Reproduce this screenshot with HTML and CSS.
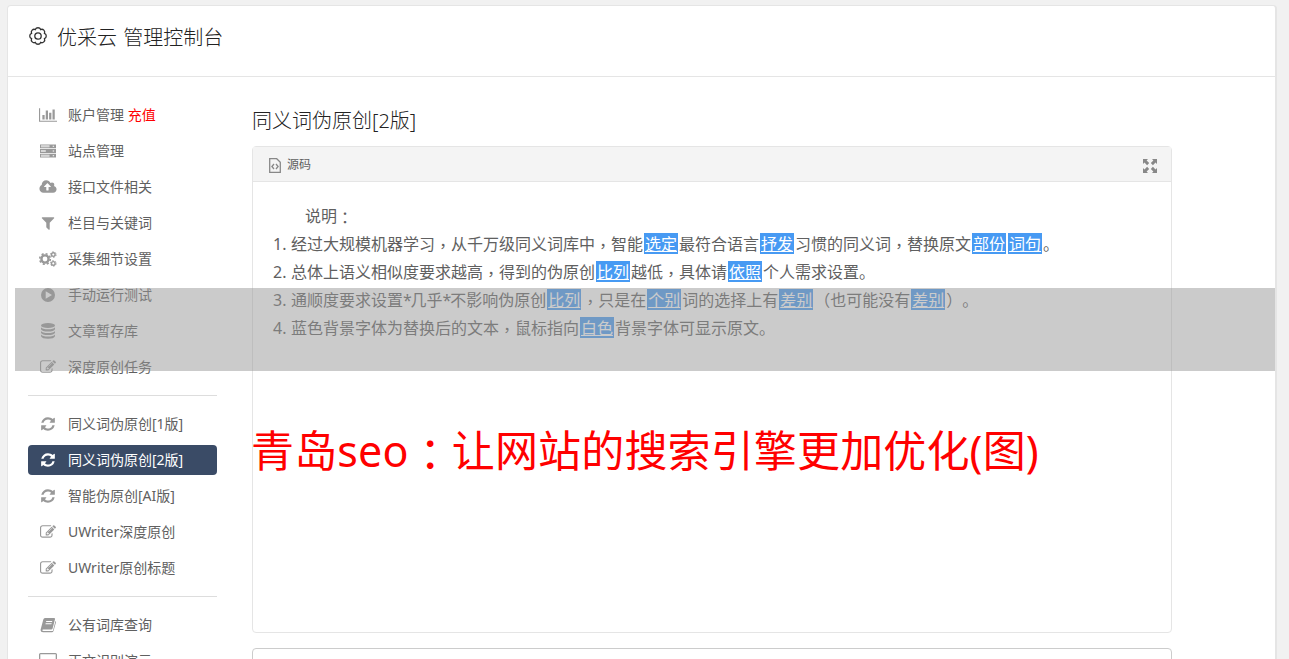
FILE: index.html
```html
<!DOCTYPE html>
<html>
<head>
    <meta charset="UTF-8">
    <meta name="viewport" content="width=device-width, initial-scale=1.0">
    <title>优采云 管理控制台</title>
    <link rel="stylesheet" href="styles.css">
</head>
<body>
    <svg class="sprite">
        <symbol id="refresh" viewBox="0 0 1792 1792"><path d="M1639 1056q0 5-1 7-64 268-268 434.5t-478 166.5q-146 0-282.5-55t-243.5-157l-129 129q-19 19-45 19t-45-19-19-45v-448q0-26 19-45t45-19h448q26 0 45 19t19 45-19 45l-137 137q71 66 161 102t187 36q134 0 250-65t186-179q11-17 53-117 8-23 30-23h192q13 0 22.5 9.5t9.5 22.5zm25-800v448q0 26-19 45t-45 19h-448q-26 0-45-19t-19-45 19-45l138-138q-148-137-349-137-134 0-250 65t-186 179q-11 17-53 117-8 23-30 23h-199q-13 0-22.5-9.5t-9.5-22.5v-7q65-268 270-434.5t480-166.5q146 0 284 55.5t245 156.5l130-129q19-19 45-19t45 19 19 45z"/></symbol>
        <symbol id="edit" viewBox="0 0 1792 1792"><path d="M888 1184l116-116-152-152-116 116v56h96v96h56zm440-720q-16-16-33 1l-350 350q-17 17-1 33t33-1l350-350q17-17 1-33zm80 594v190q0 119-84.5 203.5t-203.5 84.5h-832q-119 0-203.5-84.5t-84.5-203.5v-832q0-119 84.5-203.5t203.5-84.5h832q63 0 117 25 15 7 18 23 3 17-9 29l-49 49q-14 14-32 8-23-6-45-6h-832q-66 0-113 47t-47 113v832q0 66 47 113t113 47h832q66 0 113-47t47-113v-126q0-13 9-22l64-64q15-15 35-7t20 29zm-96-738l288 288-672 672h-288v-288zm444 132l-92 92-288-288 92-92q28-28 68-28t68 28l152 152q28 28 28 68t-28 68z"/></symbol>
    </svg>

    <div class="container">
        <div class="header">
            <svg class="gear" viewBox="0 0 20 20" fill="none" stroke="#333" stroke-width="1.3">
                <path d="M7.320 3.530A2.900 2.900 0 0 1 12.680 3.530A2.900 2.900 0 0 1 16.470 7.320A2.900 2.900 0 0 1 16.470 12.680A2.900 2.900 0 0 1 12.680 16.470A2.900 2.900 0 0 1 7.320 16.470A2.900 2.900 0 0 1 3.530 12.680A2.900 2.900 0 0 1 3.530 7.320A2.900 2.900 0 0 1 7.320 3.530Z"/>
                <circle cx="10" cy="10" r="3.200"/>
            </svg>
            <h1>优采云 管理控制台</h1>
        </div>
        <div class="main">
            <div class="sidebar">
                <a class="item"><svg viewBox="0 0 2048 1792" class="wide"><path d="M640 896v512h-256v-512h256zm384-512v1024h-256v-1024h256zm1024 1152v128h-2048v-1536h128v1408h1920zm-640-896v768h-256v-768h256zm384-384v1152h-256v-1152h256z"/></svg><span>账户管理 <b class="red">充值</b></span></a>
                <a class="item"><svg viewBox="0 0 17 16"><path fill-rule="evenodd" d="M0 1h17v4H0zM1 2v2h9V2zM13.500 2.500v1h1.500v-1zM0 6h17v4H0zM1 7v2h5V7zM13.500 7.500v1h1.500v-1zM0 11h17v4H0zM1 12v2h9v-2zM13.500 12.500v1h1.500v-1z"/><path opacity=".4" d="M1 2h9v2H1zM1 7h5v2H1zM1 12h9v2H1z"/></svg><span>站点管理</span></a>
                <a class="item"><svg viewBox="0 0 1920 1792" class="wide"><path d="M1280 864q0-14-9-23l-352-352q-9-9-23-9t-23 9l-351 351q-10 12-10 24 0 14 9 23t23 9h224v352q0 13 9.500 22.500t22.500 9.500h192q13 0 22.500-9.500t9.500-22.500v-352h224q13 0 22.500-9.500t9.500-22.500zm640 288q0 159-112.500 271.500t-271.500 112.500h-1088q-185 0-316.500-131.500t-131.500-316.500q0-130 70-240t188-165q-2-30-2-43 0-212 150-362t362-150q156 0 285.500 87t188.500 231q71-62 166-62 106 0 181 75t75 181q0 76-41 138 130 31 213.500 135.500t83.500 238.500z"/></svg><span>接口文件相关</span></a>
                <a class="item"><svg viewBox="0 0 1792 1792"><path d="M1595 295q17 41-14 70l-493 493v742q0 42-39 59-13 5-25 5-27 0-45-19l-256-256q-19-19-19-45v-486l-493-493q-31-29-14-70 17-39 59-39h1280q42 0 59 39z"/></svg><span>栏目与关键词</span></a>
                <a class="item"><svg viewBox="0 0 18 16" class="wide cogs"><circle cx="6" cy="8" r="3.600" stroke-width="2.400"/><circle cx="6" cy="8" r="5.300" stroke-width="1.600" stroke-dasharray="2.080 2.080"/><circle cx="14.300" cy="3.600" r="1.800" stroke-width="1.400"/><circle cx="14.300" cy="3.600" r="2.800" stroke-width="1" stroke-dasharray="1.470 1.470"/><circle cx="14.300" cy="12.400" r="1.800" stroke-width="1.400"/><circle cx="14.300" cy="12.400" r="2.800" stroke-width="1" stroke-dasharray="1.470 1.470"/></svg><span>采集细节设置</span></a>
                <a class="item"><svg viewBox="0 0 16 16"><path fill-rule="evenodd" d="M8 1a7 7 0 1 0 0 14a7 7 0 1 0 0-14zM5.700 4.200l6.300 3.800-6.300 3.800z"/></svg><span>手动运行测试</span></a>
                <a class="item"><svg viewBox="0 0 16 16"><ellipse cx="8" cy="2.500" rx="7" ry="2.400"/><path d="M1 4.200q1.500 2 7 2t7-2v2q-1 2.300-7 2.300t-7-2.300zM1 7.900q1.500 2 7 2t7-2v1.800q-1 2.300-7 2.300t-7-2.300zM1 11.500q1.500 2 7 2t7-2v1.800q-1 2.500-7 2.500t-7-2.500z"/></svg><span>文章暂存库</span></a>
                <a class="item"><svg><use href="#edit"/></svg><span>深度原创任务</span></a>
                <div class="divider"></div>
                <a class="item"><svg><use href="#refresh"/></svg><span>同义词伪原创[1版]</span></a>
                <a class="item active"><svg><use href="#refresh"/></svg><span>同义词伪原创[2版]</span></a>
                <a class="item"><svg><use href="#refresh"/></svg><span>智能伪原创[AI版]</span></a>
                <a class="item"><svg><use href="#edit"/></svg><span>UWriter深度原创</span></a>
                <a class="item"><svg><use href="#edit"/></svg><span>UWriter原创标题</span></a>
                <div class="divider"></div>
                <a class="item"><svg viewBox="0 0 16 16"><path fill-rule="evenodd" d="M5 1h9q1.300 0 1 1.300L12.600 11.500q-.3 1-1.400 1H3q-1 0-.7.800.2.700 1.200.7h8.700q.6 0 .8-.600L15.500 4q.8.300.5 1.300l-2.500 8.700q-.4 1.200-1.600 1.200H3q-2.300 0-2.500-2.200L3.300 2.500Q3.700 1 5 1zM6.300 4l-.3 1h6l.3-1zM5.700 6.300l-.3 1h6l.3-1z"/></svg><span>公有词库查询</span></a>
                <a class="item"><svg viewBox="0 0 18 16" class="wide"><path fill-rule="evenodd" d="M1.500 0h15q1.500 0 1.500 1.500v10q0 1.500-1.500 1.500H12v2H6v-2H1.500Q0 13 0 11.500v-10Q0 0 1.500 0zM1.300 1.300v9h15.400v-9z"/></svg><span>正文识别演示</span></a>
            </div>

            <div class="content">
                <h2>同义词伪原创[2版]</h2>
                <div class="editor">
                    <div class="toolbar">
                        <svg class="source" viewBox="0 0 12 15" fill="none" stroke="#888" stroke-width="1.300"><path d="M.7.700h7l3.600 3.600v10H.7z"/><path d="M5 6L2.900 8.500 5 11M7 6l2.100 2.500L7 11"/></svg>
                        <span>源码</span>
                        <svg class="expand" viewBox="0 0 14 14" fill="#888"><path d="M0 0h5L3.600 1.500 6.200 4.100 4.100 6.200 1.500 3.600 0 5zM14 0v5l-1.500-1.400-2.600 2.600-2.100-2.100 2.600-2.600L9 0zM0 14V9l1.500 1.400 2.600-2.600 2.100 2.100-2.600 2.600L5 14zM14 14H9l1.400-1.500-2.600-2.600 2.100-2.100 2.600 2.600L14 9z"/></svg>
                    </div>
                    <div class="text">
                        <p class="intro">说明<i>：</i></p>
                        <p>1. 经过大规模机器学习<i>，</i>从千万级同义词库中<i>，</i>智能<u>选定</u>最符合语言<u>抒发</u>习惯的同义词<i>，</i>替换原文<u>部份</u><u>词句</u>。</p>
                        <p>2. 总体上语义相似度要求越高<i>，</i>得到的伪原创<u>比列</u>越低<i>，</i>具体请<u>依照</u>个人需求设置。</p>
                        <p>3. 通顺度要求设置<span class="star">*</span>几乎<span class="star">*</span>不影响伪原创<u>比列</u><i>，</i>只是在<u>个别</u>词的选择上有<u>差别</u>（也可能没有<u>差别</u>）。</p>
                        <p>4. 蓝色背景字体为替换后的文本<i>，</i>鼠标指向<u>白色</u>背景字体可显示原文。</p>
                    </div>
                </div>
                <div class="box"></div>
            </div>
        </div>
    </div>

    <div class="mask"></div>
    <div class="caption">青岛seo<i>：</i>让网站的搜索引擎更加优化(图)</div>
</body>
</html>
```
FILE: styles.css
```css
* {
    box-sizing: border-box;
}
body {
    margin: 0;
    padding: 5px 12px 0 7px;
    height: 659px;
    overflow: hidden;
    background-color: #f1f1f1;
    font-family: "Noto Sans", "Noto Sans CJK SC", sans-serif;
    font-size: 14px;
    color: #606060;
    text-spacing-trim: space-all;
}
h1, h2, p {
    margin: 0;
    font-weight: normal;
}
/* centered full-width punctuation */
i {
    font-family: "Noto Sans CJK TC", sans-serif;
    font-style: normal;
    line-height: 1;
    vertical-align: -0.1em;
}
.sprite {
    display: none;
}
.container {
    height: 654px;
    overflow: hidden;
    background-color: #fff;
    border: 1px solid #e5e5e5;
    border-right-width: 2px;
    border-bottom: 0;
    border-radius: 4px 4px 0 0;
}
.header {
    display: flex;
    align-items: center;
    height: 71px;
    padding: 0 20px 7px;
    border-bottom: 1px solid #e5e5e5;
}
.gear {
    width: 20px;
    height: 20px;
    margin-right: 9px;
    margin-top: -4px;
}
h1, h2 {
    font-size: 20px;
    font-weight: 300;
    line-height: 30px;
    word-spacing: 1px;
    color: #222;
}
.main {
    display: flex;
    padding: 23px 20px 0;
}
.sidebar {
    display: flex;
    flex-direction: column;
    gap: 6px;
    width: 189px;
    margin-right: 35px;
}
.item {
    display: flex;
    flex: none;
    align-items: center;
    height: 30px;
    padding-left: 10px;
    border-radius: 4px;
    line-height: 30px;
    white-space: nowrap;
}
.item svg {
    width: 16px;
    height: 16px;
    margin: 0 12px 0 2px;
    fill: #999;
}
.item svg.wide {
    width: 18px;
    margin: 0 11px 0 1px;
}
.item svg.cogs {
    fill: none;
    stroke: #999;
}
.item.active {
    background-color: #3a4b66;
    color: #fff;
}
.item.active svg {
    fill: #fff;
}
.red {
    color: #f00;
    font-weight: normal;
}
.divider {
    flex: none;
    height: 1px;
    margin: 7px 0;
    background-color: #ddd;
}
.content {
    width: 920px;
    padding-top: 6px;
}
.editor {
    height: 487px;
    margin-top: 10px;
    border: 1px solid #e5e5e5;
    border-radius: 4px;
}
.toolbar {
    display: flex;
    align-items: center;
    height: 35px;
    padding: 0 14px 0 16px;
    background-color: #f4f4f4;
    border-bottom: 1px solid #e5e5e5;
    font-size: 12px;
}
.source {
    width: 12px;
    height: 15px;
    margin: 3px 6px 0 0;
}
.expand {
    width: 14px;
    height: 14px;
    margin: 4px 0 0 auto;
}
.text {
    padding: 20px 20px;
    font-size: 16px;
    white-space: nowrap;
}
.text p {
    height: 28px;
    line-height: 28px;
    word-spacing: 0.3px;
}
.text .intro {
    padding-left: 32px;
}
.text u {
    display: inline-block;
    height: 21px;
    margin: 0 1px;
    padding: 0 1px;
    line-height: 23px;
    background-color: #479af3;
    color: #fff;
}
.star {
    letter-spacing: -1.2px;
}
.box {
    height: 60px;
    margin-top: 15px;
    border: 1px solid #ccc;
    border-radius: 4px;
}
.mask {
    position: absolute;
    left: 15px;
    top: 288px;
    width: 1260px;
    height: 83px;
    background-color: rgba(152, 152, 152, 0.5);
}
.caption {
    position: absolute;
    left: 251px;
    top: 421px;
    font-size: 43px;
    letter-spacing: 0.15px;
    line-height: 60px;
    color: #f00;
    white-space: nowrap;
}
```
